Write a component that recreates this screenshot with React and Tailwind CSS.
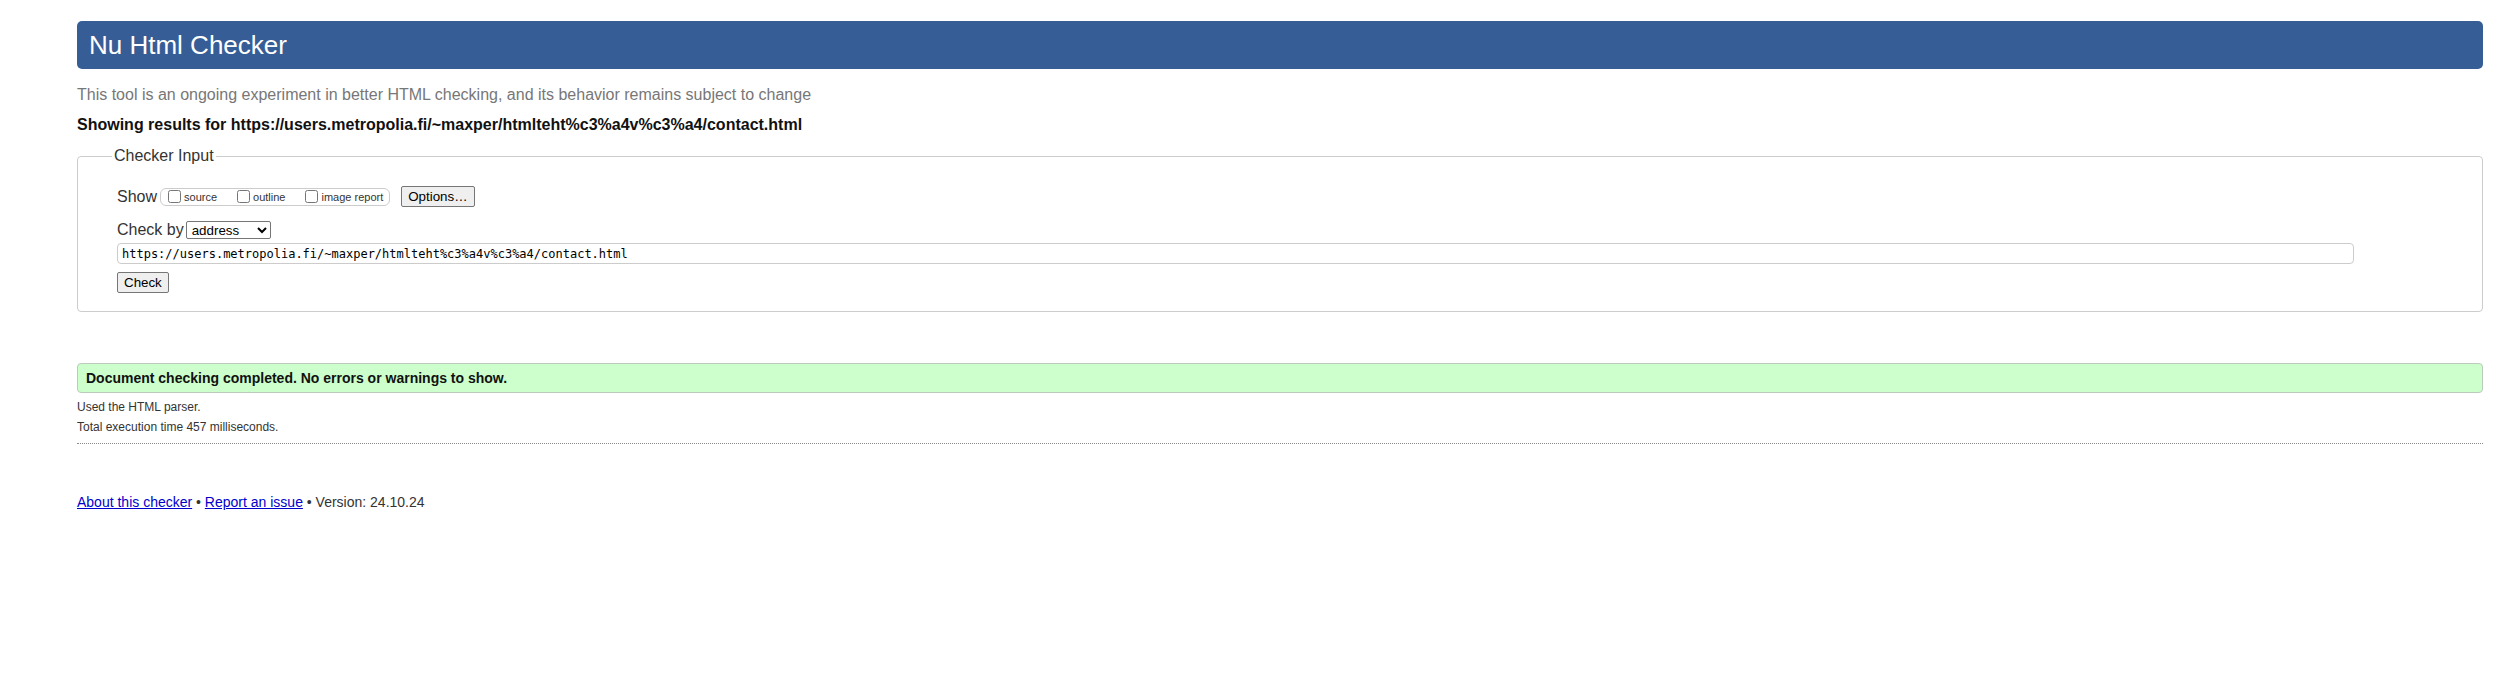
import React from 'react';

const url = 'https://users.metropolia.fi/~maxper/htmlteht%c3%a4v%c3%a4/contact.html';

const showOptions = [
  { id: 'source', label: 'source' },
  { id: 'outline', label: 'outline' },
  { id: 'image-report', label: 'image report' },
];

const App = () => (
  <div className="w-[2513px] min-h-[694px] bg-white pt-[21px] pl-[77px] pr-[30px] font-['Liberation_Sans',Arial,sans-serif] text-[#333]">
    <h1 className="h-[48px] bg-[#365d95] rounded-[5px] text-white text-[26px] leading-[48px] pl-[12px]">
      Nu Html Checker
    </h1>

    <p className="mt-[16px] text-[16px] leading-[20px] text-[#777]">
      This tool is an ongoing experiment in better HTML checking, and its behavior remains subject to change
    </p>
    <p className="mt-[10px] text-[16px] leading-[20px] font-bold text-[#111]">
      Showing results for {url}
    </p>

    {/* Checker Input */}
    <fieldset className="mt-[11px] border border-[#ccc] rounded-[4px] px-[39px] pb-[18px]">
      <legend className="ml-[-5px] px-[2px] text-[16px] leading-[20px] text-[#333]">Checker Input</legend>

      <div className="mt-[20px] flex items-center h-[21px]">
        <span className="text-[16px] leading-[20px]">Show</span>
        <div className="ml-[3px] flex items-center h-[18px] border border-[#ccc] rounded-[6px] pl-[7px] pr-[6px]">
          {showOptions.map((opt, i) => (
            <label
              key={opt.id}
              className={`flex items-center ${i > 0 ? 'ml-[20px]' : ''}`}
            >
              <input type="checkbox" className="m-0 w-[13px] h-[13px]" />
              <span className="ml-[3px] mt-[2px] text-[11px] leading-[13px]">{opt.label}</span>
            </label>
          ))}
        </div>
        <button
          type="button"
          className="ml-[11px] h-[21px] px-[6px] bg-[#efefef] border border-[#767676] rounded-[2px] text-[13.33px] leading-[19px] text-black"
        >
          Options…
        </button>
      </div>

      <div className="mt-[14px] flex items-center h-[18px]">
        <span className="text-[16px] leading-[20px]">Check by</span>
        <select
          defaultValue="address"
          className="ml-[2px] w-[85px] h-[18px] bg-white border border-[#767676] rounded-[2px] text-[13.33px] text-black pl-[1px]"
        >
          <option value="address">address</option>
          <option value="upload">file upload</option>
          <option value="text">text input</option>
        </select>
      </div>

      <input
        type="text"
        readOnly
        defaultValue={url}
        className="mt-[4px] block w-[2237px] h-[21px] border border-[#ccc] rounded-[4px] px-[4px] font-['DejaVu_Sans_Mono',monospace] text-[12px] text-black"
      />

      <button
        type="button"
        className="mt-[8px] block h-[21px] px-[6px] bg-[#efefef] border border-[#767676] rounded-[2px] text-[13.33px] leading-[19px] text-black"
      >
        Check
      </button>
    </fieldset>

    <div className="mt-[51px] h-[30px] bg-[#ccffcc] border border-[#bbcbbb] rounded-[4px] pl-[8px] flex items-center">
      <span className="text-[14px] font-bold text-[#111]">
        Document checking completed. No errors or warnings to show.
      </span>
    </div>

    <p className="mt-[4px] text-[12px] leading-[20px]">Used the HTML parser.</p>
    <p className="text-[12px] leading-[20px]">Total execution time 457 milliseconds.</p>

    <div className="mt-[6px] border-t border-dotted border-[#888]" />

    <p className="mt-[49px] text-[14px] leading-[18px]">
      <a href="#about" className="text-[#0000cc] underline">About this checker</a>
      {' • '}
      <a href="#issue" className="text-[#0000cc] underline">Report an issue</a>
      {' • Version: 24.10.24'}
    </p>
  </div>
);

export default App;
